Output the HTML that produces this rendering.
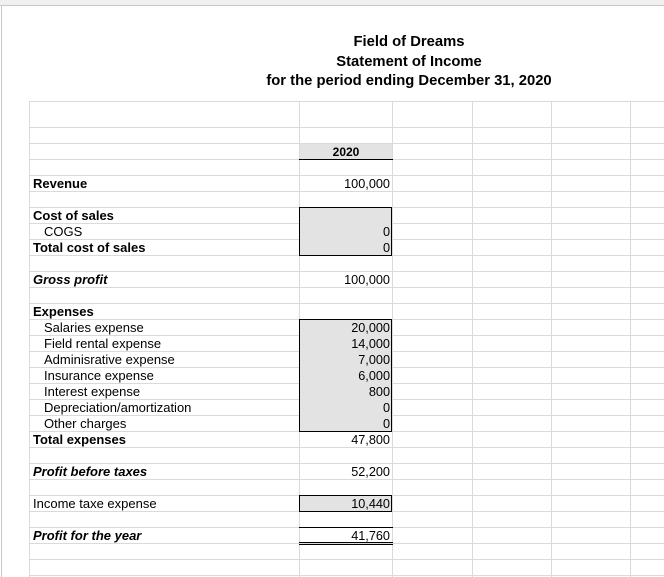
<!DOCTYPE html>
<html><head><style>
body{margin:0;width:664px;height:577px;overflow:hidden;background:#fff;position:relative;font-family:"Liberation Sans",Arial,sans-serif;color:#000}
.a{position:absolute}
.h{position:absolute;left:29px;width:635px;height:1px;background:#dadada}
.v{position:absolute;top:101px;height:476px;width:1px;background:#dadada}
.t{position:absolute;left:0;width:818px;text-align:center;font-weight:bold;font-size:14.8px;line-height:20px}
.l{position:absolute;left:33px;font-size:13px;line-height:16px;white-space:nowrap;margin-top:1px}
.in{left:44px}
.b{font-weight:bold}
.i{font-style:italic;font-weight:bold}
.n{position:absolute;left:300px;width:90px;text-align:right;font-size:12.7px;line-height:16px;margin-top:1px}
.box{position:absolute;left:299px;width:93px;background:#e3e3e3;border:1px solid #000;box-sizing:border-box}
</style></head><body>
<div class="a" style="left:0;top:0;width:664px;height:5px;background:#f0f0f0"></div>
<div class="a" style="left:0;top:5px;width:664px;height:1px;background:#c8c8c8"></div>
<div class="a" style="left:1px;top:5px;width:1px;height:572px;background:#c8c8c8"></div>
<div class="h" style="top:101px"></div>
<div class="a" style="left:29px;top:127px;width:635px;height:450px;background:repeating-linear-gradient(to bottom,#dadada 0 1px,transparent 1px 16px)"></div>
<div class="v" style="left:29px"></div>
<div class="v" style="left:299px"></div>
<div class="v" style="left:392px"></div>
<div class="v" style="left:472px"></div>
<div class="v" style="left:551px"></div>
<div class="v" style="left:630px"></div>

<div class="t" style="top:32px">Field of Dreams</div>
<div class="t" style="top:52px">Statement of Income</div>
<div class="t" style="top:71px">for the period ending December 31, 2020</div>

<div class="a" style="left:300px;top:144px;width:92px;height:15px;background:#e3e3e3"></div>
<div class="a" style="left:299px;top:159px;width:94px;height:1px;background:#000"></div>
<div class="n b" style="top:143px;width:92px;text-align:center;font-size:12px">2020</div>

<div class="box" style="top:207px;height:49px"></div>
<div class="box" style="top:319px;height:113px"></div>
<div class="box" style="top:495px;height:17px"></div>
<div class="a" style="left:299px;top:527px;width:94px;height:1px;background:#000"></div>
<div class="a" style="left:299px;top:542px;width:94px;height:1px;background:#000"></div>
<div class="a" style="left:299px;top:544px;width:94px;height:1px;background:#000"></div>

<div class="l b" style="top:175px">Revenue</div><div class="n" style="top:175px">100,000</div>
<div class="l b" style="top:207px">Cost of sales</div>
<div class="l in" style="top:223px">COGS</div><div class="n" style="top:223px">0</div>
<div class="l b" style="top:239px">Total cost of sales</div><div class="n" style="top:239px">0</div>
<div class="l i" style="top:271px">Gross profit</div><div class="n" style="top:271px">100,000</div>
<div class="l b" style="top:303px">Expenses</div>
<div class="l in" style="top:319px">Salaries expense</div><div class="n" style="top:319px">20,000</div>
<div class="l in" style="top:335px">Field rental expense</div><div class="n" style="top:335px">14,000</div>
<div class="l in" style="top:351px">Adminisrative expense</div><div class="n" style="top:351px">7,000</div>
<div class="l in" style="top:367px">Insurance expense</div><div class="n" style="top:367px">6,000</div>
<div class="l in" style="top:383px">Interest expense</div><div class="n" style="top:383px">800</div>
<div class="l in" style="top:399px">Depreciation/amortization</div><div class="n" style="top:399px">0</div>
<div class="l in" style="top:415px">Other charges</div><div class="n" style="top:415px">0</div>
<div class="l b" style="top:431px">Total expenses</div><div class="n" style="top:431px">47,800</div>
<div class="l i" style="top:463px">Profit before taxes</div><div class="n" style="top:463px">52,200</div>
<div class="l" style="top:495px">Income taxe expense</div><div class="n" style="top:495px">10,440</div>
<div class="l i" style="top:527px">Profit for the year</div><div class="n" style="top:527px">41,760</div>
</body></html>
